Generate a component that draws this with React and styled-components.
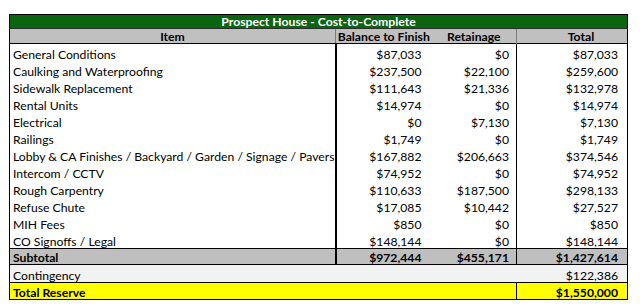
import React from 'react';
import styled, { createGlobalStyle, css } from 'styled-components';

const GlobalStyle = createGlobalStyle`
  html, body {
    margin: 0;
    padding: 0;
    background: #ffffff;
  }
  body {
    font-family: Lato, "Liberation Sans", sans-serif;
  }
`;

const rows = [
  ['General Conditions', '$87,033', '$0', '$87,033'],
  ['Caulking and Waterproofing', '$237,500', '$22,100', '$259,600'],
  ['Sidewalk Replacement', '$111,643', '$21,336', '$132,978'],
  ['Rental Units', '$14,974', '$0', '$14,974'],
  ['Electrical', '$0', '$7,130', '$7,130'],
  ['Railings', '$1,749', '$0', '$1,749'],
  ['Lobby & CA Finishes / Backyard / Garden / Signage / Pavers', '$167,882', '$206,663', '$374,546'],
  ['Intercom / CCTV', '$74,952', '$0', '$74,952'],
  ['Rough Carpentry', '$110,633', '$187,500', '$298,133'],
  ['Refuse Chute', '$17,085', '$10,442', '$27,527'],
  ['MIH Fees', '$850', '$0', '$850'],
  ['CO Signoffs / Legal', '$148,144', '$0', '$148,144'],
];

const App = () => {
  return (
    <>
      <GlobalStyle />
      <Page>
        <Sheet>
          <colgroup>
            <col style={{ width: 326 }} />
            <col style={{ width: 96 }} />
            <col style={{ width: 85 }} />
            <col style={{ width: 111 }} />
          </colgroup>
          <tbody>
            <TitleRow>
              <td colSpan={4}>Prospect House - Cost-to-Complete</td>
            </TitleRow>
            <HeadRow>
              <HeadCell divider>Item</HeadCell>
              <HeadCell>Balance to Finish</HeadCell>
              <HeadCell divider>Retainage</HeadCell>
              <HeadCell shift={18}>Total</HeadCell>
            </HeadRow>
            {rows.map(([name, balance, retainage, total], i) => (
              <BodyRow key={name} last={i === rows.length - 1}>
                <ItemCell>{name}</ItemCell>
                <MoneyCell pad={10}>{balance}</MoneyCell>
                <MoneyCell pad={7} divider>
                  {retainage}
                </MoneyCell>
                <MoneyCell pad={9}>{total}</MoneyCell>
              </BodyRow>
            ))}
            <SubtotalRow>
              <ItemCell bold>Subtotal</ItemCell>
              <MoneyCell pad={10} bold>
                $972,444
              </MoneyCell>
              <MoneyCell pad={7} bold divider>
                $455,171
              </MoneyCell>
              <MoneyCell pad={9} bold>
                $1,427,614
              </MoneyCell>
            </SubtotalRow>
            <ContingencyRow>
              <PlainCell colSpan={3}>Contingency</PlainCell>
              <MoneyCell pad={9}>$122,386</MoneyCell>
            </ContingencyRow>
            <ReserveRow>
              <PlainCell colSpan={3} bold divider>
                Total Reserve
              </PlainCell>
              <MoneyCell pad={9} bold>
                $1,550,000
              </MoneyCell>
            </ReserveRow>
          </tbody>
        </Sheet>
      </Page>
    </>
  );
};

const Page = styled.div`
  padding: 14px 0 0 9px;
`;

const Sheet = styled.table`
  border-collapse: collapse;
  table-layout: fixed;
  width: 619px;
  border: 1px solid #000;
  font-size: 12.2px;
  color: #000;
  td {
    padding: 0;
    white-space: nowrap;
    overflow: visible;
    line-height: 13px;
    vertical-align: bottom;
  }
`;

const TitleRow = styled.tr`
  background: #0a6410;
  td {
    height: 13px;
    line-height: 13px;
    vertical-align: middle;
    text-align: center;
    color: #ffffff;
    font-weight: bold;
    border-bottom: 1px solid #2d2d2d;
  }
`;

const HeadRow = styled.tr`
  background: #c0c0c0;
  border-bottom: 1px solid #000;
`;

const HeadCell = styled.td`
  height: 14px;
  text-align: center;
  font-weight: bold;
  padding-left: ${props => props.shift || 0}px !important;
  ${props =>
    props.divider &&
    css`
      border-right: 1px solid #7a7a7a;
    `}
`;

const BodyRow = styled.tr`
  td {
    height: 17px;
  }
  ${props =>
    props.last &&
    css`
      border-bottom: 1px solid #000;
    `}
`;

const ItemCell = styled.td`
  padding-left: 3px !important;
  text-align: left;
  border-right: 2px solid #000;
  font-weight: ${props => (props.bold ? 'bold' : 'normal')};
`;

const MoneyCell = styled.td`
  text-align: right;
  padding-right: ${props => props.pad}px !important;
  font-weight: ${props => (props.bold ? 'bold' : 'normal')};
  ${props =>
    props.divider &&
    css`
      border-right: 1px solid #000;
    `}
`;

const PlainCell = styled.td`
  padding-left: 3px !important;
  text-align: left;
  font-weight: ${props => (props.bold ? 'bold' : 'normal')};
  ${props =>
    props.divider &&
    css`
      border-right: 1px solid #000;
    `}
`;

const SubtotalRow = styled.tr`
  background: #bfbfbf;
  border-bottom: 1px solid #000;
  td {
    height: 15px;
  }
`;

const ContingencyRow = styled.tr`
  background: #f2f2f2;
  border-bottom: 1px solid #000;
  td {
    height: 17px;
  }
`;

const ReserveRow = styled.tr`
  background: #ffff00;
  td {
    height: 16px;
  }
`;

export default App;
